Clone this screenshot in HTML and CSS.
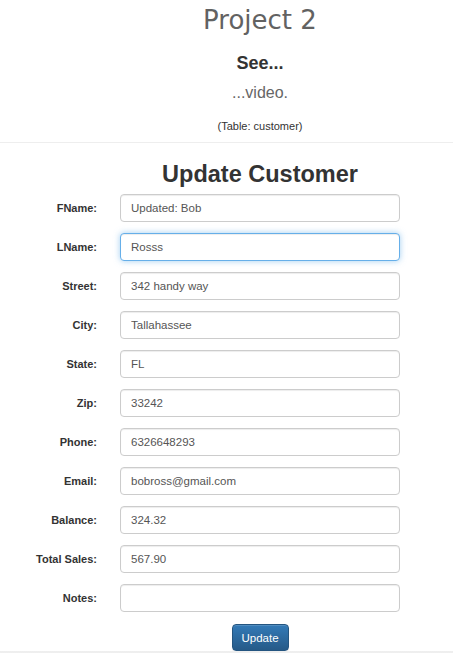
FILE: index.html
```html
<!DOCTYPE html>
<html>
<head>
<meta charset="utf-8">
<title>Project 2</title>
<link rel="stylesheet" href="styles.css">
</head>
<body>
<header class="header">
  <h1 class="title">Project 2</h1>
  <h3 class="subtitle">See...</h3>
  <p class="lead">...video.</p>
  <p class="table-note">(Table: customer)</p>
</header>
<hr class="divider">
<h2 class="form-title">Update Customer</h2>
<form class="form">
  <label class="form-label">FName:</label>
  <input class="form-input" type="text" value="Updated: Bob">
  <label class="form-label">LName:</label>
  <input class="form-input is-focused" type="text" value="Rosss">
  <label class="form-label">Street:</label>
  <input class="form-input" type="text" value="342 handy way">
  <label class="form-label">City:</label>
  <input class="form-input" type="text" value="Tallahassee">
  <label class="form-label">State:</label>
  <input class="form-input" type="text" value="FL">
  <label class="form-label">Zip:</label>
  <input class="form-input" type="text" value="33242">
  <label class="form-label">Phone:</label>
  <input class="form-input" type="text" value="6326648293">
  <label class="form-label">Email:</label>
  <input class="form-input" type="text" value="bobross@gmail.com">
  <label class="form-label">Balance:</label>
  <input class="form-input" type="text" value="324.32">
  <label class="form-label">Total Sales:</label>
  <input class="form-input" type="text" value="567.90">
  <label class="form-label">Notes:</label>
  <input class="form-input" type="text" value="">
  <div class="form-actions">
    <button class="btn-primary" type="button">Update</button>
  </div>
</form>
</body>
</html>
```

FILE: styles.css
```css
html, body {
  margin: 0;
  padding: 0;
  background: #fff;
}
body {
  font-family: "Liberation Sans", Arial, sans-serif;
  color: #333;
  overflow: hidden;
}
body::after {
  content: "";
  position: fixed;
  left: 0;
  right: 0;
  bottom: 0;
  height: 34px;
  background: linear-gradient(rgba(238,238,238,0), #eeeeee);
  z-index: -1;
}
.header {
  padding-left: 67px;
  text-align: center;
}
.title {
  margin: 5px 0 0;
  font-family: "DejaVu Sans", sans-serif;
  font-weight: normal;
  font-size: 26px;
  line-height: 30px;
  color: #626262;
}
.subtitle {
  margin: 18px 0 0;
  font-size: 18px;
  line-height: 20px;
  font-weight: bold;
  color: #333;
}
.lead {
  margin: 10px 0 0;
  font-size: 16px;
  line-height: 20px;
  color: #666;
}
.table-note {
  margin: 16px 0 0;
  font-size: 11px;
  line-height: 14px;
  color: #333;
}
.divider {
  margin: 9px 0 0;
  border: 0;
  border-top: 1px solid #eee;
  height: 0;
}
.form-title {
  margin: 17px 0 0;
  padding-left: 67px;
  text-align: center;
  font-size: 23.5px;
  line-height: 28px;
  font-weight: bold;
  color: #333;
}
.form {
  margin-top: 6px;
  display: grid;
  grid-template-columns: 97px 280px;
  column-gap: 23px;
  row-gap: 11px;
  align-items: center;
}
.form-label {
  text-align: right;
  font-size: 11px;
  font-weight: bold;
  color: #333;
  line-height: 14px;
}
.form-input {
  box-sizing: border-box;
  height: 28px;
  width: 280px;
  margin: 0;
  padding: 0 10px;
  border: 1px solid #ccc;
  border-radius: 4px;
  background: #fff;
  font-family: "Liberation Sans", Arial, sans-serif;
  font-size: 11.5px;
  color: #555;
  box-shadow: inset 0 1px 1px rgba(0,0,0,.075);
  outline: none;
}
.form-input.is-focused {
  border-color: #66afe9;
  box-shadow: inset 0 1px 1px rgba(0,0,0,.075), 0 0 6px rgba(102,175,233,.6);
}
.form-actions {
  grid-column: 2;
  display: flex;
  justify-content: center;
  margin-top: 1px;
}
.btn-primary {
  box-sizing: border-box;
  height: 27px;
  width: 57px;
  padding: 0;
  border: 1px solid #245580;
  border-radius: 4px;
  background: linear-gradient(#337ab7, #265a88);
  color: #fff;
  font-family: "Liberation Sans", Arial, sans-serif;
  font-size: 11.5px;
  box-shadow: inset 0 1px 0 rgba(255,255,255,.15), 0 1px 1px rgba(0,0,0,.075);
}
```
